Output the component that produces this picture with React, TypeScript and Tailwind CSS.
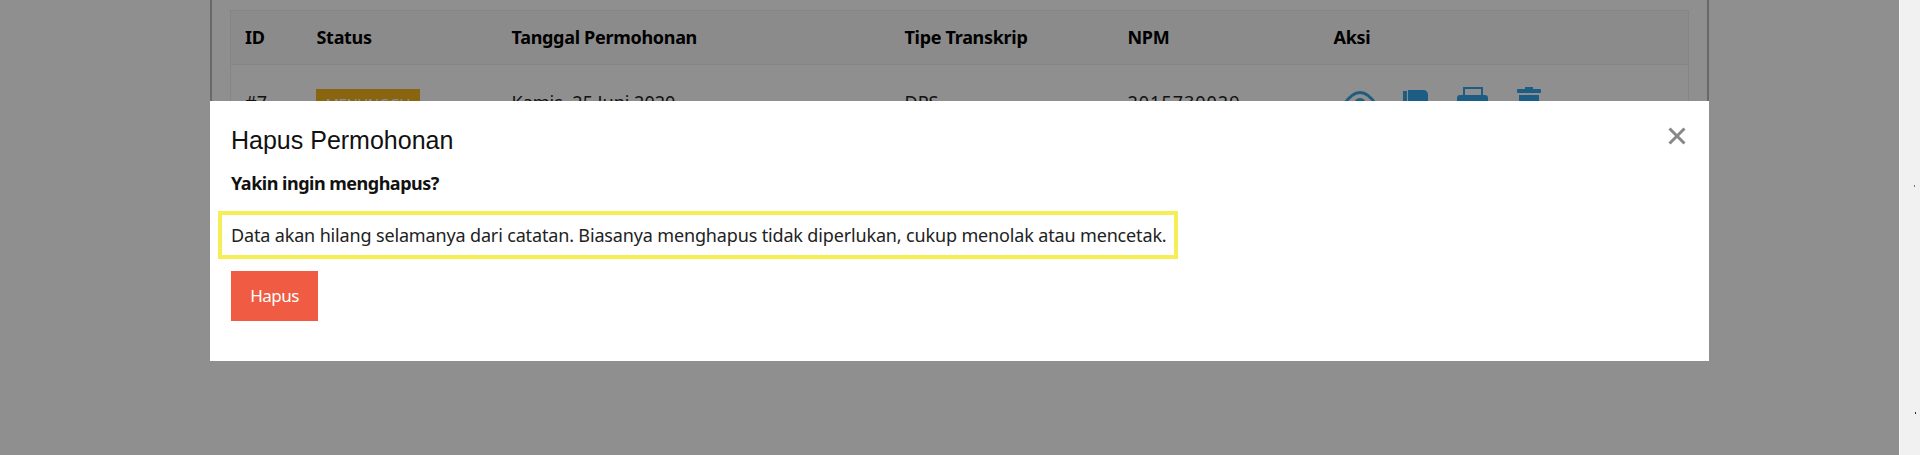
const cols = [
  { label: 'ID', width: 'w-[71px]', pad: 'pl-[14px]' },
  { label: 'Status', width: 'w-[195px]', pad: 'pl-[15px]' },
  { label: 'Tanggal Permohonan', width: 'w-[393px]', pad: 'pl-[15px]' },
  { label: 'Tipe Transkrip', width: 'w-[223px]', pad: 'pl-[15px]' },
  { label: 'NPM', width: 'w-[206px]', pad: 'pl-[15px]' },
  { label: 'Aksi', width: 'w-[370px]', pad: 'pl-[15px]' },
]

function EyeIcon() {
  return (
    <svg width="36" height="24" viewBox="0 0 36 24" className="-mr-[4px] mt-[4px]">
      <path d="M1.5 14 Q18 -11 34.5 14 Q18 33 1.5 14 Z" fill="none" stroke="currentColor" strokeWidth="3" />
      <circle cx="18" cy="13" r="6" fill="currentColor" />
    </svg>
  )
}

function FileIcon() {
  return (
    <svg width="25" height="28" viewBox="0 0 25 28" className="mt-[3px]">
      <rect x="0" y="1" width="4" height="27" fill="currentColor" />
      <path d="M5 0 H20 Q25 0 25 5 V28 H5 Z" fill="currentColor" />
    </svg>
  )
}

function PrinterIcon() {
  return (
    <svg width="31" height="28" viewBox="0 0 31 28">
      <path d="M0 11 Q0 8 3 8 H28 Q31 8 31 11 V28 H0 Z" fill="currentColor" />
      <rect x="7" y="1" width="18" height="8" fill="none" stroke="currentColor" strokeWidth="2" />
    </svg>
  )
}

function TrashIcon() {
  return (
    <svg width="24" height="28" viewBox="0 0 24 28">
      <rect x="8" y="0" width="8" height="3" fill="currentColor" />
      <rect x="0" y="2" width="24" height="4" rx="1" fill="currentColor" />
      <rect x="2" y="8" width="20" height="20" fill="currentColor" />
    </svg>
  )
}

export default function App() {
  return (
    <div className="relative h-[455px] overflow-hidden bg-white font-['Noto_Sans',sans-serif]">
      {/* Page behind the modal */}
      <div className="ml-[210px] h-[150px] w-[1499px] border-x-2 border-[#bbbbbb] pl-[18px] pt-[10px] text-[18px] leading-[27px] text-[#222]">
        <table className="w-[1458px] table-fixed border border-[#eeeeee]">
          <thead>
            <tr className="h-[54px] border-b border-[#eeeeee] bg-[#f8f8f8] text-left">
              {cols.map((col) => (
                <th key={col.label} className={`${col.width} ${col.pad} font-bold tracking-[-0.3px] text-black`}>
                  {col.label}
                </th>
              ))}
            </tr>
          </thead>
          <tbody>
            <tr className="h-[80px] align-top">
              <td className="pl-[14px] pt-[24px]">#7</td>
              <td className="pl-[14px] pt-[24px]">
                <span className="inline-block bg-[#f5b41c] px-[10px] py-[4px] align-top text-[15px] leading-[20px] tracking-[-0.5px] text-white">
                  MENUNGGU
                </span>
              </td>
              <td className="pl-[15px] pt-[24px]">Kamis, 25 Juni 2020</td>
              <td className="pl-[15px] pt-[24px]">DPS</td>
              <td className="pl-[15px] pt-[24px] tracking-[1px]">2015730029</td>
              <td className="pl-[15px] pt-[22px]">
                <div className="ml-[8px] flex items-start gap-[29px] text-[#36a6ea]">
                  <EyeIcon />
                  <FileIcon />
                  <PrinterIcon />
                  <TrashIcon />
                </div>
              </td>
            </tr>
          </tbody>
        </table>
      </div>

      {/* Backdrop */}
      <div className="absolute inset-0 bg-black/[0.44]" />

      {/* Scrollbar */}
      <div className="absolute inset-y-0 right-0 w-[21px] border-l border-[#fafafa] bg-[#f1f1f1]">
        <div className="absolute left-[14px] top-[185px] h-[2px] w-px bg-gray-500" />
        <div className="absolute left-[15px] top-[412px] h-[2px] w-px bg-gray-800" />
      </div>

      {/* Modal */}
      <div className="absolute left-[210px] top-[101px] h-[260px] w-[1499px] bg-white px-[21px] pt-[23px]">
        <h2 className="font-['Liberation_Sans',sans-serif] text-[25px] leading-[32px] text-[#111]">
          Hapus Permohonan
        </h2>
        <button className="absolute right-[22px] top-[25px] text-[#888888]" aria-label="Tutup">
          <svg width="20" height="20" viewBox="0 0 20 20" fill="none" stroke="currentColor" strokeWidth="3">
            <path d="M2.5 2.5 L17.5 17.5 M17.5 2.5 L2.5 17.5" />
          </svg>
        </button>
        <p className="mt-[14px] text-[18px] leading-[26px] font-bold tracking-[-0.5px] text-[#111]">
          Yakin ingin menghapus?
        </p>
        <p className="-ml-[13px] mt-[15px] w-[960px] border-[4px] border-[#f5ee55] py-[7px] pl-[9px] text-[18px] leading-[26px] tracking-[-0.15px] whitespace-nowrap text-[#222]">
          Data akan hilang selamanya dari catatan. Biasanya menghapus tidak diperlukan, cukup menolak atau mencetak.
        </p>
        <button className="mt-[12px] h-[50px] w-[87px] bg-[#ef5b43] text-[17px] tracking-[-0.5px] text-white">
          Hapus
        </button>
      </div>
    </div>
  )
}
